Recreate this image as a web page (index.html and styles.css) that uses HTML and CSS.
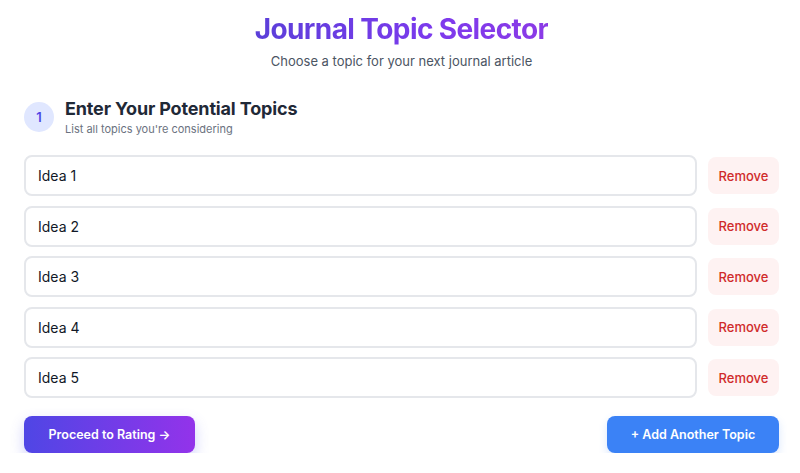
FILE: index.html
```html
<!DOCTYPE html>
<html>
<head>
<meta charset="utf-8">
<link rel="stylesheet" href="styles.css">
</head>
<body>
<main class="page">
  <header class="hero">
    <h1 class="title">Journal Topic Selector</h1>
    <p class="subtitle">Choose a topic for your next journal article</p>
  </header>
  <section class="step">
    <div class="step-head">
      <div class="step-num">1</div>
      <div class="step-text">
        <h2 class="step-title">Enter Your Potential Topics</h2>
        <p class="step-sub">List all topics you're considering</p>
      </div>
    </div>
    <div class="topics">
      <div class="topic-row"><input class="topic-input" value="Idea 1"><button class="remove">Remove</button></div>
      <div class="topic-row"><input class="topic-input" value="Idea 2"><button class="remove">Remove</button></div>
      <div class="topic-row"><input class="topic-input" value="Idea 3"><button class="remove">Remove</button></div>
      <div class="topic-row"><input class="topic-input" value="Idea 4"><button class="remove">Remove</button></div>
      <div class="topic-row"><input class="topic-input" value="Idea 5"><button class="remove">Remove</button></div>
    </div>
    <div class="actions">
      <button class="btn proceed">Proceed to Rating →</button>
      <button class="btn add">+ Add Another Topic</button>
    </div>
  </section>
</main>
</body>
</html>
```
FILE: styles.css
```css
* { box-sizing: border-box; }
html, body { margin: 0; padding: 0; background: #fff; }
body { font-family: Inter, "Noto Sans", sans-serif; color: #1f2937; }
.page { padding: 11px 21px 0 24px; }
.hero { text-align: center; }
.title {
  margin: 0;
  font-size: 28px;
  line-height: 36px;
  font-weight: 700;
  letter-spacing: -0.6px;
  background: linear-gradient(90deg, #5b3fd9, #7c3aed 60%, #8b3ae6);
  -webkit-background-clip: text;
  background-clip: text;
  color: transparent;
  display: inline-block;
}
.subtitle { margin: 4px 0 0; font-size: 13px; line-height: 20px; color: #4b5563; }
.step { margin-top: 26px; }
.step-head { display: flex; align-items: center; gap: 11px; }
.step-num {
  width: 30px; height: 30px; border-radius: 50%;
  background: #e0e7ff; color: #4f46e5;
  display: flex; align-items: center; justify-content: center;
  font-size: 13px; font-weight: 600;
}
.step-title { margin: 0; font-size: 18px; line-height: 24px; font-weight: 700; color: #1f2937; letter-spacing: -0.15px; }
.step-sub { margin: 0; font-size: 11px; line-height: 16px; color: #6b7280; }
.topics { margin-top: 18px; display: flex; flex-direction: column; gap: 9.5px; }
.topic-row { display: flex; align-items: center; gap: 11px; }
.topic-input {
  flex: 1; height: 41px; border: 2px solid #e5e7eb; border-radius: 8px;
  padding: 0 12px; font: 14px Inter, sans-serif; color: #111827; background: #fff;
  outline: none;
}
.remove {
  width: 71px; height: 37px; border: none; border-radius: 8px;
  background: #fef2f2; color: #d02b2b; font: 500 13px Inter, sans-serif; cursor: pointer;
}
.actions { margin-top: 18px; display: flex; justify-content: space-between; }
.btn {
  height: 37px; border: none; border-radius: 8px; color: #fff;
  font: 600 12.5px Inter, sans-serif; cursor: pointer;
}
.proceed {
  width: 171px; padding: 0;
  background: linear-gradient(90deg, #4f46e5, #9333ea);
  box-shadow: 0 6px 14px rgba(99, 102, 241, 0.3);
}
.add {
  width: 172px; padding: 0;
  background: #3b82f6;
  box-shadow: 0 4px 8px rgba(59, 130, 246, 0.2);
}
```
